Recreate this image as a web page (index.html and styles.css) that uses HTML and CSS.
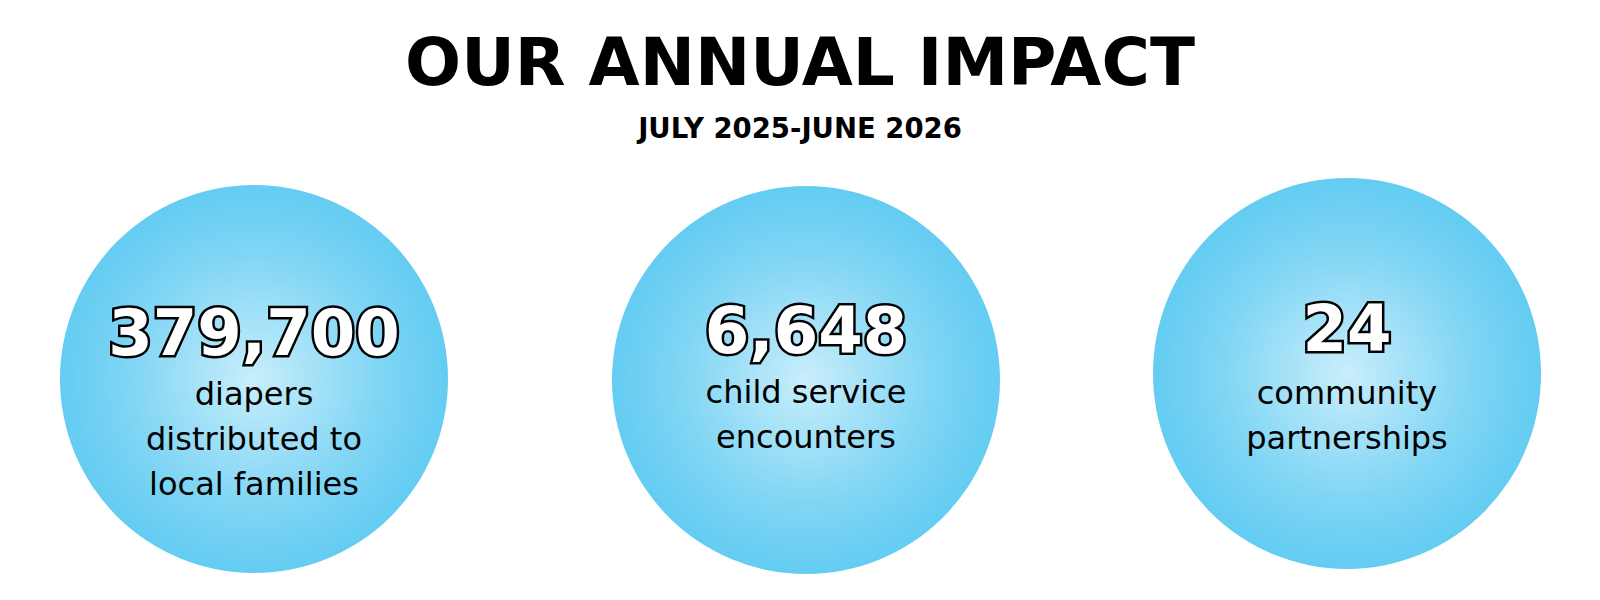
FILE: index.html
```html
<!DOCTYPE html>
<html lang="en">
<head>
<meta charset="utf-8">
<title>Our Annual Impact</title>
<link rel="stylesheet" href="styles.css">
</head>
<body>
<main class="impact">
  <h1 class="impact__title">OUR ANNUAL IMPACT</h1>
  <p class="impact__period">JULY 2025-JUNE 2026</p>
  <section class="stats">
    <div class="stat stat--first">
      <div class="stat__number">379,700</div>
      <div class="stat__label">diapers<br>distributed to<br>local families</div>
    </div>
    <div class="stat stat--second">
      <div class="stat__number">6,648</div>
      <div class="stat__label">child service<br>encounters</div>
    </div>
    <div class="stat stat--third">
      <div class="stat__number">24</div>
      <div class="stat__label stat__label--spaced">community<br>partnerships</div>
    </div>
  </section>
</main>
</body>
</html>
```

FILE: styles.css
```css
html, body {
  margin: 0;
  padding: 0;
  background: #ffffff;
}

body {
  font-family: "DejaVu Sans", Verdana, sans-serif;
  color: #000000;
  width: 1600px;
  height: 600px;
  overflow: hidden;
}

.impact {
  display: flex;
  flex-direction: column;
  align-items: center;
}

.impact__title {
  margin: 24px 0 0;
  font-size: 66px;
  font-weight: bold;
  line-height: normal;
  letter-spacing: 0;
}

.impact__period {
  margin: 11px 0 0;
  font-size: 27.5px;
  font-weight: bold;
  line-height: normal;
}

.stats {
  align-self: stretch;
  display: flex;
  align-items: flex-start;
  gap: 159px;
  padding: 0 60px;
  margin-top: 34px;
}

.stat {
  flex: 0 0 auto;
  width: 388px;
  height: 388px;
  border-radius: 50%;
  background: radial-gradient(circle closest-side, #c9eefb 0%, #a6e2f8 30%, #7fd5f4 65%, #64ccf2 100%);
  box-sizing: border-box;
  padding-top: 109px;
  display: flex;
  flex-direction: column;
  align-items: center;
  text-align: center;
}

.stat--first {
  margin-top: 7px;
}

.stat--second {
  margin-top: 8px;
  margin-left: 5px;
  margin-right: -6px;
  padding-top: 106px;
}

.stat--third {
  height: 391px;
  padding-top: 112px;
}

.stat__number {
  font-size: 64px;
  font-weight: bold;
  line-height: 78px;
  color: #ffffff;
  -webkit-text-stroke: 5px #000000;
  paint-order: stroke fill;
}

.stat__label {
  font-size: 32px;
  line-height: 45px;
  color: #000000;
}

.stat__label--spaced {
  margin-top: 3px;
}
```
